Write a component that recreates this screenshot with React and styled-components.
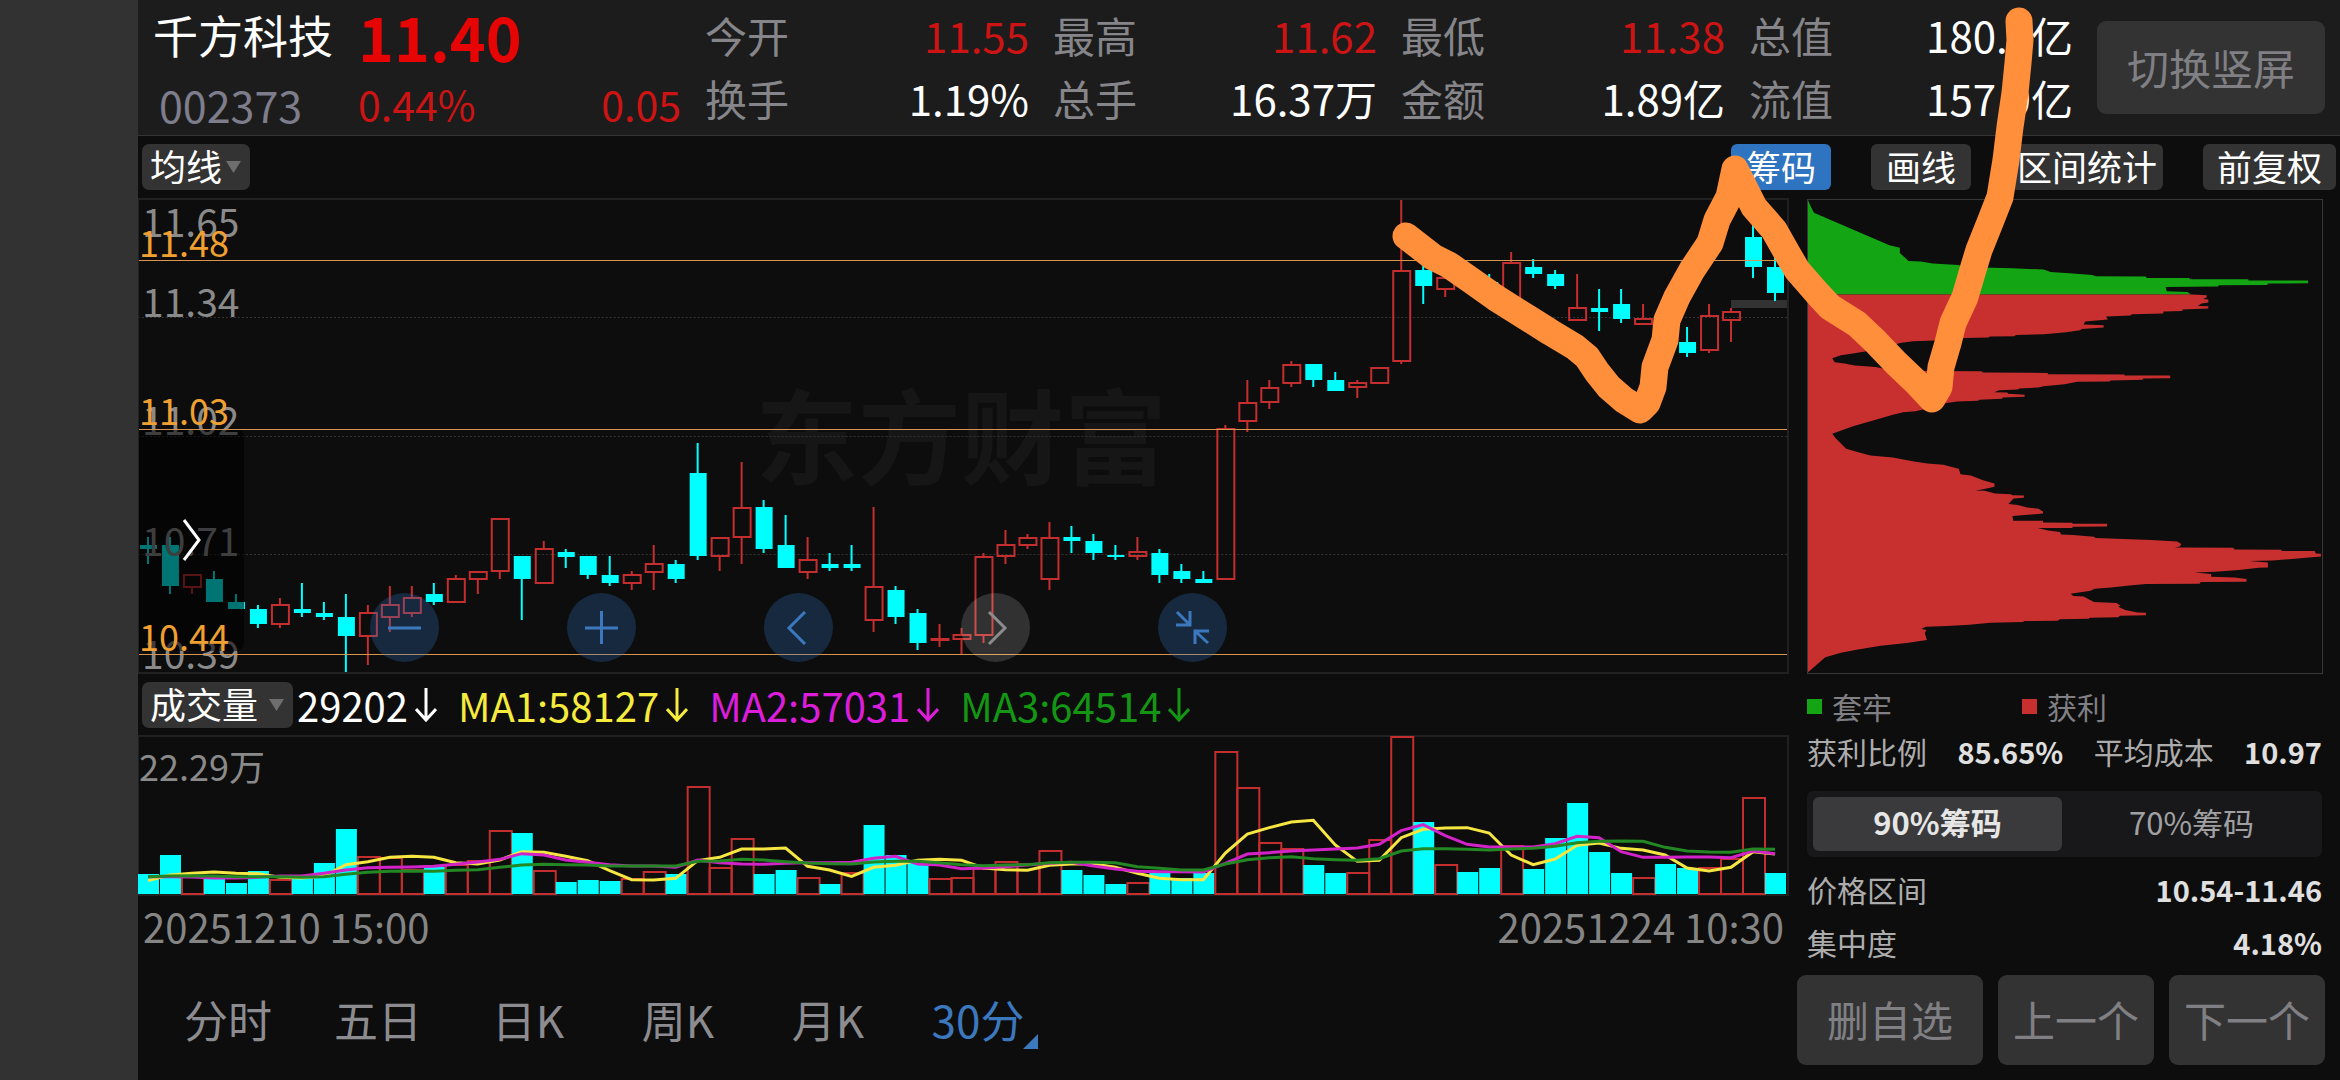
// App.jsx
import React, { useState } from 'react'
import styled, { createGlobalStyle } from 'styled-components'

const GlobalStyle = createGlobalStyle`
  * {
    box-sizing: border-box;
  }
  body {
    margin: 0;
    background: #0d0d0d;
    color: #fff;
    font-family: 'Noto Sans CJK SC', sans-serif;
  }
  button, select {
    font-family: inherit;
    border: none;
    padding: 0;
    margin: 0;
    cursor: pointer;
  }
  dl, dd, dt, h1, p {
    margin: 0;
    font-weight: 400;
  }
`

const RED = '#c42e2e'
const CYAN = '#00ffff'

const Screen = styled.div`
  position: relative;
  display: flex;
  min-height: 100vh;
`

const SideStrip = styled.div`
  flex: 0 0 138px;
  background: #323232;
`

const Main = styled.main`
  flex: 1;
  display: flex;
  flex-direction: column;
  min-width: 0;
`

const Header = styled.header`
  display: flex;
  gap: 24px;
  height: 136px;
  padding: 0 15px 0 15px;
  background: #1c1c1c;
  border-bottom: 1px solid #333;
`

const Identity = styled.div`
  flex: 0 0 528px;
  display: grid;
  grid-template-columns: 205px 1fr;
  grid-template-rows: 72px 60px;
`

const StockName = styled.h1`
  font-size: 45px;
  line-height: 70px;
`

const Price = styled.p`
  color: #e60404;
  font-size: 61px;
  font-weight: 700;
  line-height: 72px;
`

const Code = styled.p`
  padding-left: 6px;
  color: #7d7d8c;
  font-size: 43px;
  line-height: 64px;
`

const Change = styled.p`
  display: flex;
  justify-content: space-between;
  color: #cc1414;
  font-size: 41px;
  line-height: 62px;
`

const Stats = styled.dl`
  flex: 1;
  display: grid;
  grid-template-columns: repeat(4, 1fr);
  grid-auto-rows: 63px;
  column-gap: 24px;
  padding-top: 3px;
`

const Stat = styled.div`
  display: flex;
  justify-content: space-between;
  font-size: 42px;
  line-height: 63px;
  white-space: nowrap;

  dt {
    color: #85858a;
  }
  dd {
    color: ${(p) => (p.$up ? '#cc1414' : '#fff')};
  }
`

const GreyButton = styled.button`
  flex: ${(p) => p.$grow || 0} 1 ${(p) => p.$width || 0}px;
  height: ${(p) => p.$height}px;
  padding-bottom: 2px;
  border-radius: 9px;
  background: #333;
  color: #808084;
  font-size: 42px;
  line-height: 60px;
  white-space: nowrap;
`

const SwitchButton = styled(GreyButton)`
  margin-top: 21px;
`

const Toolbar = styled.div`
  display: flex;
  align-items: center;
  gap: 40px;
  height: 62px;
  padding: 0 4px;
`

const ToolButton = styled.button`
  height: 46px;
  padding: 0 ${(p) => p.$pad}px 3px;
  border-radius: 6px;
  background: ${(p) => (p.$on ? '#2f74c0' : '#333')};
  color: #fff;
  font-size: 35px;
  line-height: 43px;
`

const SelectBox = styled.label`
  position: relative;
  display: flex;
  margin-right: ${(p) => (p.$push ? 'auto' : '4px')};
`

const Select = styled.select`
  appearance: none;
  width: ${(p) => p.$width}px;
  height: 46px;
  padding: 0 8px 3px;
  border-radius: 7px;
  background: #333;
  color: #fff;
  font-size: 36px;
  line-height: 43px;
`

const Caret = styled.svg`
  position: absolute;
  right: 9px;
  top: 17px;
  pointer-events: none;
`

const Body = styled.div`
  flex: 1;
  display: flex;
`

const Charts = styled.section`
  flex: 1;
  display: flex;
  flex-direction: column;
  min-width: 0;
`

const PricePane = styled.div`
  position: relative;
  flex: 1;
  min-height: 300px;
  margin-right: 1px;
  border: 2px solid #212121;
  border-left-width: 1px;
`

const VolumePane = styled(PricePane)`
  flex: 0 0 161px;
  min-height: 0;
`

const Plot = styled.svg`
  position: absolute;
  inset: 0;
  width: 100%;
  height: 100%;
`

const Watermark = styled.div`
  position: absolute;
  inset: 0;
  padding: 0 4px 8px 0;
  display: flex;
  align-items: center;
  justify-content: center;
  color: #161616;
  font-size: 103px;
  font-weight: 700;
`

const AxisLabel = styled.span`
  position: absolute;
  left: ${(p) => (p.$line ? 0 : 3)}px;
  top: ${(p) => p.$top}%;
  color: ${(p) => (p.$line ? '#f0a030' : '#8a8a8a')};
  font-size: ${(p) => (p.$line ? 36 : 39)}px;
  line-height: 40px;
`

const VolumeLabel = styled(AxisLabel)`
  left: 0;
  font-size: 36px;
`

const Drawer = styled.button`
  position: absolute;
  left: 0;
  top: 48.5%;
  width: 105px;
  height: 47%;
  border-radius: 0 8px 8px 0;
  background: rgba(0, 0, 0, 0.55);

  svg {
    display: block;
    margin-left: 42px;
  }
`

const Controls = styled.div`
  position: absolute;
  left: 231px;
  bottom: 10px;
  display: flex;
  gap: 128px;
`

const RoundButton = styled.button`
  width: 69px;
  height: 69px;
  border-radius: 50%;
  background: ${(p) => (p.$muted ? 'rgba(255, 255, 255, 0.15)' : 'rgba(47, 116, 192, 0.28)')};
  color: ${(p) => (p.$muted ? '#8c8c8c' : '#3c78be')};

  svg {
    display: block;
  }
`

const IndicatorBar = styled.div`
  display: flex;
  align-items: center;
  height: 61px;
  padding-left: 4px;
`

const Indicator = styled.span`
  display: flex;
  align-items: center;
  gap: 7px;
  margin-right: 21px;
  color: ${(p) => p.$color};
  font-size: 40px;
  line-height: 54px;
`

const Dates = styled.div`
  display: flex;
  justify-content: space-between;
  padding: 2px 6px 0 5px;
  color: #858585;
  font-size: 40px;
  line-height: 56px;
`

const Periods = styled.nav`
  display: flex;
  align-items: center;
  height: 126px;
  padding: 3px 0 0 15px;
`

const Period = styled.button`
  position: relative;
  flex: 0 0 150px;
  background: none;
  color: ${(p) => (p.$on ? '#3c78be' : '#8c8c90')};
  font-size: 44px;
  line-height: 64px;
`

const Corner = styled.svg`
  position: absolute;
  right: 15px;
  bottom: 2px;
`

const ChipPanel = styled.aside`
  flex: 0 0 550px;
  display: flex;
  flex-direction: column;
  padding: 0 15px 15px 7px;
`

const ChipPlot = styled.div`
  position: relative;
  flex: 1;
  margin: 1px 2px 0 10px;
  border: 1px solid #383838;
`

const ChipInfo = styled.div`
  padding: 0 3px 0 10px;
`

const Legend = styled.div`
  display: flex;
  height: 51px;
  padding-top: 14px;
`

const LegendItem = styled.span`
  flex: 0 0 215px;
  display: flex;
  align-items: center;
  gap: 10px;
  color: #808084;
  font-size: 30px;
  line-height: 37px;

  &::before {
    content: '';
    width: 15px;
    height: 15px;
    background: ${(p) => p.$color};
  }
`

const InfoRow = styled.p`
  display: flex;
  justify-content: space-between;
  color: #acacac;
  font-size: 30px;
  line-height: 53px;
  white-space: nowrap;

  b {
    color: #e0e0e0;
    font-size: 29px;
    font-weight: 700;
  }
`

const Tabs = styled.div`
  display: flex;
  gap: 5px;
  margin: 13px 0 6px;
  padding: 6px;
  border-radius: 6px;
  background: #18181a;
`

const Tab = styled.button`
  flex: 1;
  height: 54px;
  padding-bottom: 4px;
  border-radius: 6px;
  background: ${(p) => (p.$on ? '#3a3a3c' : 'transparent')};
  color: ${(p) => (p.$on ? '#e6e6e6' : '#a0a0a2')};
  font-size: 31px;
  font-weight: ${(p) => (p.$on ? 700 : 400)};
  line-height: 50px;
`

const Actions = styled.div`
  display: flex;
  gap: 15px;
  margin-top: 6px;
`

const Marker = styled.svg`
  position: absolute;
  inset: 0;
  width: 100%;
  height: 100%;
  pointer-events: none;
`

const stats = [
  ['今开', '11.55', true],
  ['最高', '11.62', true],
  ['最低', '11.38', true],
  ['总值', '180.1亿'],
  ['换手', '1.19%'],
  ['总手', '16.37万'],
  ['金额', '1.89亿'],
  ['流值', '157.9亿'],
]

// kind, high, low, body top, body bottom
const candles = [
  ['c', 537, 564, 545, 549], ['c', 537, 594, 545, 586], ['r', 574, 594, 574, 588], ['c', 571, 602, 579, 602],
  ['c', 594, 609, 602, 609], ['c', 605, 628, 609, 624], ['r', 598, 628, 604, 625], ['c', 583, 617, 609, 613],
  ['c', 602, 620, 613, 617], ['c', 594, 673, 617, 636], ['r', 605, 665, 612, 637], ['r', 586, 632, 604, 618],
  ['r', 586, 617, 597, 614], ['c', 583, 605, 594, 602], ['r', 575, 603, 578, 603], ['r', 571, 594, 571, 580],
  ['r', 518, 579, 518, 572], ['c', 556, 620, 556, 579], ['r', 541, 584, 548, 584], ['c', 549, 568, 552, 557],
  ['c', 556, 579, 556, 575], ['c', 556, 586, 575, 583], ['r', 571, 590, 574, 584], ['r', 545, 590, 563, 573],
  ['c', 560, 583, 564, 579], ['c', 443, 560, 473, 556], ['r', 537, 571, 537, 557], ['r', 462, 564, 507, 538],
  ['c', 500, 553, 507, 549], ['c', 515, 568, 545, 568], ['r', 537, 579, 559, 573], ['c', 553, 571, 564, 568],
  ['c', 545, 571, 564, 568], ['r', 507, 632, 586, 621], ['c', 586, 624, 590, 617], ['c', 609, 650, 613, 643],
  ['r', 624, 647, 638, 640], ['r', 628, 654, 634, 640], ['r', 553, 643, 556, 636], ['r', 530, 564, 544, 557],
  ['r', 534, 549, 537, 546], ['r', 522, 590, 537, 580], ['c', 526, 553, 537, 541], ['c', 534, 560, 541, 553],
  ['c', 545, 560, 555, 557], ['r', 537, 560, 551, 557], ['c', 549, 583, 553, 575], ['c', 564, 583, 571, 579],
  ['c', 571, 583, 579, 583], ['r', 425, 580, 428, 580], ['r', 380, 432, 402, 422], ['r', 380, 409, 387, 403],
  ['r', 361, 387, 364, 384], ['c', 364, 387, 364, 380], ['c', 372, 391, 380, 391], ['r', 380, 398, 382, 388],
  ['r', 367, 384, 367, 384], ['r', 199, 364, 270, 362], ['c', 257, 304, 270, 286], ['r', 267, 297, 277, 290],
  ['c', 270, 285, 276, 282], ['c', 274, 290, 282, 287], ['r', 252, 305, 262, 305], ['c', 259, 278, 267, 274],
  ['c', 270, 289, 274, 286], ['r', 274, 321, 307, 321], ['c', 289, 331, 308, 312], ['c', 289, 323, 304, 319],
  ['r', 304, 325, 318, 325], ['r', 310, 335, 318, 330], ['c', 327, 357, 342, 353], ['r', 304, 353, 315, 351],
  ['r', 308, 342, 311, 321], ['c', 223, 278, 237, 267], ['c', 257, 301, 267, 293],
]

// kind and bar top
const volumes = [
  'c875', 'c856', 'r877', 'c877', 'c884', 'c872', 'r880', 'c878', 'c864', 'c830', 'r857', 'r858', 'r870', 'c868', 'r865',
  'r861', 'r831', 'c834', 'r871', 'c883', 'c881', 'c882', 'r879', 'r872', 'c875', 'r787', 'r868', 'r839', 'c875', 'c871',
  'r878', 'c885', 'r873', 'c826', 'c856', 'c864', 'r879', 'r878', 'r869', 'r862', 'r864', 'r851', 'c871', 'c876', 'c885',
  'r883', 'c874', 'c879', 'c874', 'r752', 'r788', 'r843', 'r849', 'c866', 'c874', 'r873', 'r840', 'r737', 'c823', 'r865',
  'c873', 'c869', 'r846', 'c870', 'c839', 'c804', 'c853', 'c874', 'r878', 'c865', 'c869', 'r868', 'r859', 'r798', 'c874',
]

// thirds of a pixel below y = 670
const averages = [
  ['#f5e642', [632, 615, 610, 606, 610, 611, 622, 624, 618, 584, 575, 562, 559, 562, 578, 582, 570, 545, 547, 559, 572, 602, 629, 630, 625, 572, 562, 537, 537, 534, 589, 600, 619, 592, 586, 571, 568, 571, 594, 599, 601, 586, 582, 582, 592, 610, 625, 629, 629, 549, 492, 473, 456, 451, 525, 574, 571, 503, 478, 474, 473, 489, 555, 584, 567, 526, 519, 535, 540, 555, 594, 603, 592, 545, 552]],
  ['#d223c8', [620, 620, 621, 624, 624, 622, 618, 618, 610, 600, 593, 592, 591, 589, 583, 576, 568, 551, 555, 570, 577, 584, 588, 588, 592, 570, 578, 582, 583, 580, 578, 578, 577, 565, 559, 582, 585, 596, 594, 590, 585, 580, 577, 588, 597, 604, 605, 605, 606, 580, 552, 548, 543, 540, 537, 534, 523, 482, 464, 497, 523, 531, 531, 531, 521, 499, 503, 545, 562, 562, 561, 561, 563, 543, 551]],
  ['#238723', [620, 618, 617, 618, 620, 620, 620, 622, 620, 613, 607, 604, 603, 604, 601, 599, 592, 585, 583, 584, 585, 588, 588, 588, 588, 574, 573, 568, 570, 575, 579, 581, 582, 576, 574, 574, 578, 584, 587, 585, 584, 578, 577, 577, 578, 590, 595, 600, 600, 582, 569, 563, 560, 566, 569, 571, 566, 543, 536, 536, 538, 540, 537, 535, 529, 518, 514, 513, 514, 532, 543, 546, 547, 537, 538]],
]

const indicators = [
  ['29202', '#fff'],
  ['MA1:58127', '#f5eb3c'],
  ['MA2:57031', '#dc1edc'],
  ['MA3:64514', '#149614'],
]

const trappedShape =
  '35,27 40,40 52,65 270,163 300,170 300,186 325,210 360,212 395,218 470,222 480,228 625,232 715,236 735,243 800,248 855,252 865,256 1010,257 1012,261 1135,261 1137,265 1305,265 1306,269 1478,269 1478,277 1362,278 1360,282 1220,283 1218,287 1067,288 1070,301 1130,303 1140,311 35,311'

const profitShape =
  '35,311 1145,311 1185,313 1185,320 1175,324 1190,326 1190,335 1170,338 1160,345 1190,346 1190,353 1115,356 1115,360 1060,362 1060,368 970,370 965,374 895,377 900,386 835,392 830,401 888,403 888,410 825,414 820,418 780,424 740,428 715,430 635,432 630,436 560,437 555,440 485,441 400,449 338,451 300,456 290,460 200,482 155,489 130,493 105,502 112,514 140,518 170,524 230,528 260,535 350,540 535,541 540,545 727,546 727,550 948,551 948,554 1080,554 1080,562 1002,563 1000,567 908,569 905,572 812,573 775,580 715,586 700,590 645,593 640,596 587,598 572,604 610,605 612,609 660,612 660,618 597,620 595,624 530,627 525,630 465,632 430,637 370,655 345,661 310,664 280,672 165,706 105,729 115,742 145,774 180,784 215,794 280,800 310,806 345,813 380,818 425,822 470,834 475,850 505,854 540,868 573,878 573,888 540,895 518,899 545,900 575,908 620,910 625,913 658,914 658,921 628,923 613,940 640,943 668,950 700,954 713,962 713,968 670,972 625,976 627,990 713,990 713,995 798,996 798,999 898,999 898,1007 798,1008 798,1012 698,1012 728,1019 762,1024 765,1031 800,1033 860,1038 865,1042 925,1044 1025,1048 1100,1052 1112,1060 1108,1067 1093,1070 1262,1071 1265,1076 1400,1077 1402,1081 1497,1081 1500,1088 1515,1089 1515,1097 1480,1100 1440,1104 1375,1109 1308,1111 1362,1115 1362,1130 1335,1131 1278,1138 1210,1143 1150,1145 1198,1150 1198,1158 1265,1160 1300,1165 1300,1173 1168,1174 1165,1179 1010,1180 955,1185 910,1190 862,1194 850,1200 793,1209 800,1216 830,1217 860,1234 925,1237 937,1245 930,1248 950,1258 985,1265 1010,1266 1010,1274 935,1275 930,1280 848,1281 845,1284 762,1286 755,1290 660,1291 655,1294 562,1296 500,1302 437,1306 375,1308 362,1315 377,1318 372,1328 378,1348 320,1357 245,1365 210,1371 175,1377 130,1386 85,1400 35,1445'

const gridLabels = [
  ['11.65', 0],
  ['11.34', 17],
  ['11.02', 42],
  ['10.71', 67.5],
  ['10.39', 91.5],
]

const lineLabels = [
  ['11.48', 4.5],
  ['11.03', 40],
  ['10.44', 88],
]

const controls = [
  ['缩小', 'M18 35H51'],
  ['放大', 'M18 35H51M34.5 18V51'],
  ['向左', 'M41 19L25 35L41 51'],
  ['向右', 'M28 19L44 35L28 51', true],
  ['收起', 'M19 19L32 32M18 32H32V18M50 50L37 38M51 38H37V51'],
]

const periods = ['分时', '五日', '日K', '周K', '月K', '30分']

const centre = (i) => 148 + 22 * i

const Candle = ({ data: [kind, high, low, top, bottom], x }) => {
  if (kind === 'c') {
    return (
      <g fill={CYAN}>
        <rect x={x - 1} y={high} width='2' height={low - high} />
        <rect x={x - 8} y={top} width='17' height={bottom - top} />
      </g>
    )
  }
  return (
    <g fill='none' stroke={RED} strokeWidth='2'>
      <path d={`M${x} ${high}V${top}M${x} ${bottom}V${low}`} />
      <rect x={x - 8} y={top + 1} width='17' height={Math.max(bottom - top - 2, 1)} />
    </g>
  )
}

const PriceChart = () => (
  <PricePane>
    <Watermark>东方财富</Watermark>
    <Plot viewBox='139 200 1649 472' preserveAspectRatio='none'>
      <g stroke='#333' strokeDasharray='2 2'>
        <path d='M138 317.500H1790M138 436.500H1790M138 554.500H1790' />
      </g>
      <rect x='1732' y='300' width='56' height='8' fill='#333' />
      {candles.map((candle, i) => (
        <Candle key={i} data={candle} x={centre(i)} />
      ))}
    </Plot>
    {gridLabels.map(([text, top]) => (
      <AxisLabel key={text} $top={top}>
        {text}
      </AxisLabel>
    ))}
    <Drawer aria-label='展开'>
      <svg width='22' height='44' fill='none' stroke='#fff' strokeWidth='3'>
        <path d='M3 2L18 22L3 42' />
      </svg>
    </Drawer>
    <Plot viewBox='139 200 1649 472' preserveAspectRatio='none' pointerEvents='none'>
      <path d='M138 260.500H1790M138 429.500H1790M138 654.500H1790' stroke='#d89650' />
    </Plot>
    {lineLabels.map(([text, top]) => (
      <AxisLabel key={text} $top={top} $line>
        {text}
      </AxisLabel>
    ))}
    <Controls>
      {controls.map(([name, d, muted]) => (
        <RoundButton key={name} aria-label={name} $muted={muted}>
          <svg width='69' height='69' fill='none' stroke='currentColor' strokeWidth='3'>
            <path d={d} />
          </svg>
        </RoundButton>
      ))}
    </Controls>
  </PricePane>
)

const VolumeChart = () => (
  <VolumePane>
    <Plot viewBox='139 737 1649 157' preserveAspectRatio='none' overflow='visible'>
      {volumes.map((bar, i) => {
        const top = Number(bar.slice(1))
        return bar[0] === 'c' ? (
          <rect key={i} x={centre(i) - 10} y={top - 1} width='21' height={895 - top} fill={CYAN} />
        ) : (
          <rect key={i} x={centre(i) - 10} y={top} width='22' height={894 - top} fill='none' stroke={RED} strokeWidth='2' />
        )
      })}
      {averages.map(([color, values]) => (
        <polyline
          key={color}
          points={values.map((v, i) => `${centre(i)},${670 + v / 3}`).join(' ')}
          fill='none'
          stroke={color}
          strokeWidth='3'
        />
      ))}
    </Plot>
    <VolumeLabel $top={5}>22.29万</VolumeLabel>
  </VolumePane>
)

const Dropdown = ({ label, width, push }) => (
  <SelectBox $push={push}>
    <Select $width={width} aria-label={label}>
      <option>{label}</option>
    </Select>
    <Caret width='15' height='12' fill='#6e6e6e'>
      <path d='M0 0H15L7.500 12Z' />
    </Caret>
  </SelectBox>
)

const App = () => {
  const [range, setRange] = useState('90%筹码')
  const [period, setPeriod] = useState('30分')

  return (
    <Screen>
      <GlobalStyle />
      <SideStrip />
      <Main>
        <Header>
          <Identity>
            <StockName>千方科技</StockName>
            <Price>11.40</Price>
            <Code>002373</Code>
            <Change>
              <span>0.44%</span>
              <span>0.05</span>
            </Change>
          </Identity>
          <Stats>
            {stats.map(([name, value, up]) => (
              <Stat key={name} $up={up}>
                <dt>{name}</dt>
                <dd>{value}</dd>
              </Stat>
            ))}
          </Stats>
          <SwitchButton $width={228} $height={93}>
            切换竖屏
          </SwitchButton>
        </Header>

        <Toolbar>
          <Dropdown label='均线' width={108} push />
          <ToolButton $on $pad={15}>筹码</ToolButton>
          <ToolButton $pad={15}>画线</ToolButton>
          <ToolButton $pad={6}>区间统计</ToolButton>
          <ToolButton $pad={14}>前复权</ToolButton>
        </Toolbar>

        <Body>
          <Charts>
            <PriceChart />
            <IndicatorBar>
              <Dropdown label='成交量' width={151} />
              {indicators.map(([text, color]) => (
                <Indicator key={text} $color={color}>
                  {text}
                  <svg width='22' height='34' fill='none' stroke='currentColor' strokeWidth='3'>
                    <path d='M11 0V32M1 21L11 32L21 21' />
                  </svg>
                </Indicator>
              ))}
            </IndicatorBar>
            <VolumeChart />
            <Dates>
              <time>20251210 15:00</time>
              <time>20251224 10:30</time>
            </Dates>
            <Periods>
              {periods.map((name) => (
                <Period key={name} $on={name === period} onClick={() => setPeriod(name)}>
                  {name}
                  {name === '30分' && (
                    <Corner width='15' height='15' fill='currentColor'>
                      <path d='M15 0V15H0Z' />
                    </Corner>
                  )}
                </Period>
              ))}
            </Periods>
          </Charts>

          <ChipPanel>
            <ChipPlot>
              <Plot viewBox='35 27 1483 1420' preserveAspectRatio='none'>
                <polygon points={trappedShape} fill='#13a513' />
                <polygon points={profitShape} fill='#c83030' />
              </Plot>
            </ChipPlot>
            <ChipInfo>
              <Legend>
                <LegendItem $color='#13a513'>套牢</LegendItem>
                <LegendItem $color='#c83030'>获利</LegendItem>
              </Legend>
              <InfoRow>
                <span>获利比例</span>
                <b>85.65%</b>
                <span>平均成本</span>
                <b>10.97</b>
              </InfoRow>
              <Tabs>
                {['90%筹码', '70%筹码'].map((name) => (
                  <Tab key={name} $on={name === range} onClick={() => setRange(name)}>
                    {name}
                  </Tab>
                ))}
              </Tabs>
              <InfoRow>
                <span>价格区间</span>
                <b>10.54-11.46</b>
              </InfoRow>
              <InfoRow>
                <span>集中度</span>
                <b>4.18%</b>
              </InfoRow>
            </ChipInfo>
            <Actions>
              <GreyButton $grow={1} $width={156} $height={90}>删自选</GreyButton>
              <GreyButton $width={156} $height={90}>上一个</GreyButton>
              <GreyButton $width={156} $height={90}>下一个</GreyButton>
            </Actions>
          </ChipPanel>
        </Body>
      </Main>

      {/* freehand trend line drawn over the whole screen */}
      <Marker viewBox='0 0 2340 1080' preserveAspectRatio='none'>
        <polyline
          points='1406,236 1433,257 1449,265 1472,281 1496,298 1531,320 1550,332 1575,347 1587,357 1597,372 1609,387 1624,400 1640,410 1647,403 1653,387 1655,367 1665,340 1667,320 1677,297 1692,270 1710,243 1717,220 1729,197 1735,169 1754,207 1774,230 1787,253 1797,270 1817,293 1830,307 1857,324 1875,341 1896,363 1917,383 1932,399 1939,387 1941,367 1948,343 1953,323 1965,297 1972,273 1979,250 1991,220 2000,197 2006,160 2010,127 2015,93 2018,63 2020,40 2019,21'
          fill='none'
          stroke='#ff8f3b'
          strokeWidth='27'
          strokeLinecap='round'
          strokeLinejoin='round'
        />
      </Marker>
    </Screen>
  )
}

export default App
